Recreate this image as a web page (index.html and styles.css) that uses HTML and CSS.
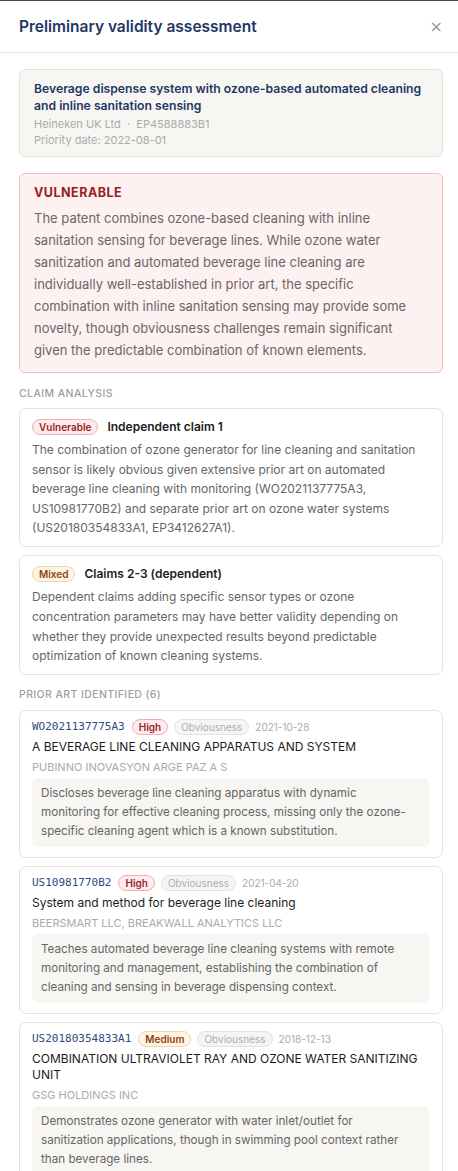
FILE: index.html
```html
<!DOCTYPE html>
<html lang="en">
<head>
    <meta charset="UTF-8">
    <meta name="viewport" content="width=device-width, initial-scale=1.0">
    <title>Preliminary validity assessment</title>
    <link rel="stylesheet" href="styles.css">
</head>
<body>
    <div class="panel">
        <header class="panel-header">
            <h1>Preliminary validity assessment</h1>
            <button class="close" aria-label="Close">&times;</button>
        </header>

        <div class="panel-body">
            <div class="patent">
                <div class="patent-title">Beverage dispense system with ozone-based automated cleaning and inline sanitation sensing</div>
                <div class="patent-meta">Heineken UK Ltd &nbsp;&middot;&nbsp; EP4588883B1</div>
                <div class="patent-meta">Priority date: 2022-08-01</div>
            </div>

            <div class="verdict">
                <div class="verdict-label">VULNERABLE</div>
                <p>The patent combines ozone-based cleaning with inline sanitation sensing for beverage lines. While ozone water sanitization and automated beverage line cleaning are individually well-established in prior art, the specific combination with inline sanitation sensing may provide some novelty, though obviousness challenges remain significant given the predictable combination of known elements.</p>
            </div>

            <h2 class="section-label">Claim analysis</h2>

            <div class="card">
                <div class="claim-head">
                    <span class="badge badge-red">Vulnerable</span>
                    <span class="claim-title">Independent claim 1</span>
                </div>
                <p class="claim-text">The combination of ozone generator for line cleaning and sanitation sensor is likely obvious given extensive prior art on automated beverage line cleaning with monitoring (WO2021137775A3, US10981770B2) and separate prior art on ozone water systems (US20180354833A1, EP3412627A1).</p>
            </div>

            <div class="card">
                <div class="claim-head">
                    <span class="badge badge-amber">Mixed</span>
                    <span class="claim-title">Claims 2-3 (dependent)</span>
                </div>
                <p class="claim-text">Dependent claims adding specific sensor types or ozone concentration parameters may have better validity depending on whether they provide unexpected results beyond predictable optimization of known cleaning systems.</p>
            </div>

            <h2 class="section-label">Prior art identified (6)</h2>

            <div class="card art">
                <div class="art-head">
                    <span class="art-number">WO2021137775A3</span>
                    <span class="badge badge-red">High</span>
                    <span class="badge badge-gray">Obviousness</span>
                    <span class="art-date">2021-10-28</span>
                </div>
                <div class="art-title">A BEVERAGE LINE CLEANING APPARATUS AND SYSTEM</div>
                <div class="art-owner">PUBINNO INOVASYON ARGE PAZ A S</div>
                <p class="art-summary">Discloses beverage line cleaning apparatus with dynamic monitoring for effective cleaning process, missing only the ozone-specific cleaning agent which is a known substitution.</p>
            </div>

            <div class="card art">
                <div class="art-head">
                    <span class="art-number">US10981770B2</span>
                    <span class="badge badge-red">High</span>
                    <span class="badge badge-gray">Obviousness</span>
                    <span class="art-date">2021-04-20</span>
                </div>
                <div class="art-title">System and method for beverage line cleaning</div>
                <div class="art-owner">BEERSMART LLC, BREAKWALL ANALYTICS LLC</div>
                <p class="art-summary">Teaches automated beverage line cleaning systems with remote monitoring and management, establishing the combination of cleaning and sensing in beverage dispensing context.</p>
            </div>

            <div class="card art">
                <div class="art-head">
                    <span class="art-number">US20180354833A1</span>
                    <span class="badge badge-amber">Medium</span>
                    <span class="badge badge-gray">Obviousness</span>
                    <span class="art-date">2018-12-13</span>
                </div>
                <div class="art-title">COMBINATION ULTRAVIOLET RAY AND OZONE WATER SANITIZING UNIT</div>
                <div class="art-owner">GSG HOLDINGS INC</div>
                <p class="art-summary">Demonstrates ozone generator with water inlet/outlet for sanitization applications, though in swimming pool context rather than beverage lines.</p>
            </div>
        </div>
    </div>
</body>
</html>
```

FILE: styles.css
```css
* {
    box-sizing: border-box;
}
body {
    margin: 0;
    font-family: Inter, "Noto Sans", sans-serif;
    background-color: #fff;
    color: #1a1a1a;
}
.panel {
    border-top: 1px solid #4a4a4a;
    height: 1171px;
    overflow: hidden;
}
.panel-header {
    display: flex;
    align-items: center;
    justify-content: space-between;
    height: 52px;
    padding: 0 15px 0 19px;
    border-bottom: 1px solid #e2e2e2;
}
h1 {
    margin: 0;
    font-size: 15.5px;
    font-weight: 600;
    color: #1f3763;
}
.close {
    background: none;
    border: none;
    padding: 0;
    font-size: 16px;
    line-height: 1;
    color: #9a9a9a;
    cursor: pointer;
    font-family: "DejaVu Sans", sans-serif;
}
.panel-body {
    padding: 16px 15px 0 19px;
}
.patent {
    background-color: #f7f6f3;
    border: 1px solid #e5e2dc;
    border-radius: 6px;
    padding: 10px 14px 8px;
}
.patent-title {
    font-size: 12.2px;
    font-weight: 600;
    line-height: 17px;
    color: #1f3763;
}
.patent-meta {
    font-size: 11px;
    line-height: 16px;
    color: #ababab;
}
.patent-title + .patent-meta {
    margin-top: 2px;
}
.verdict {
    margin-top: 16px;
    background-color: #fdf1f1;
    border: 1px solid #f0bcc0;
    border-radius: 6px;
    padding: 10px 14px 11px;
}
.verdict-label {
    font-size: 12.5px;
    font-weight: 700;
    line-height: 18px;
    letter-spacing: 0.5px;
    color: #9b1c25;
}
.verdict p {
    margin: 5px 0 0;
    font-size: 13px;
    line-height: 22px;
    color: #6d6666;
}
.section-label {
    margin: 15px 0 8px;
    font-size: 10.5px;
    font-weight: 500;
    line-height: 12px;
    letter-spacing: 0.4px;
    text-transform: uppercase;
    color: #a19e99;
}
.card {
    background-color: #fff;
    border: 1px solid #e4e2de;
    border-radius: 7px;
    padding: 10px 12px 8.5px;
    margin-bottom: 8px;
}
.card + .section-label {
    margin-top: 14px;
    margin-bottom: 9px;
}
.claim-head {
    display: flex;
    align-items: center;
    gap: 9px;
}
.claim-title {
    font-size: 12px;
    font-weight: 600;
    line-height: 16px;
    color: #1c1c1c;
}
.claim-text {
    margin: 5px 0 0;
    font-size: 12px;
    line-height: 19.6px;
    color: #666;
}
.badge {
    display: inline-block;
    font-size: 10px;
    font-weight: 600;
    line-height: 12px;
    padding: 1px 6px;
    border-radius: 9px;
    border: 1px solid;
}
.badge-red {
    background-color: #fdeced;
    border-color: #f2aeb4;
    color: #9b1c25;
}
.badge-amber {
    background-color: #fdf5e7;
    border-color: #f1d6a6;
    color: #92400e;
}
.badge-gray {
    background-color: #f6f5f3;
    border-color: #e3e1dd;
    color: #b0aeaa;
    font-weight: 400;
}
.art {
    padding-top: 8px;
    padding-bottom: 10px;
}
.art-head {
    display: flex;
    align-items: center;
    gap: 6px;
}
.art-number {
    font-family: "DejaVu Sans Mono", monospace;
    font-size: 11px;
    line-height: 16px;
    color: #2d4a7c;
    margin-right: 1px;
}
.art-date {
    font-size: 10px;
    color: #ababab;
}
.art-title {
    margin-top: 4px;
    font-size: 12px;
    line-height: 16px;
    color: #1c1c1c;
}
.art-owner {
    margin-top: 4px;
    font-size: 11px;
    line-height: 16px;
    color: #aaa;
}
.art-summary {
    margin: 3px 0 0;
    background-color: #f7f6f3;
    border-radius: 6px;
    padding: 5.5px 14.5px 6.5px 9px;
    font-size: 11.66px;
    line-height: 19px;
    color: #666;
}
```
